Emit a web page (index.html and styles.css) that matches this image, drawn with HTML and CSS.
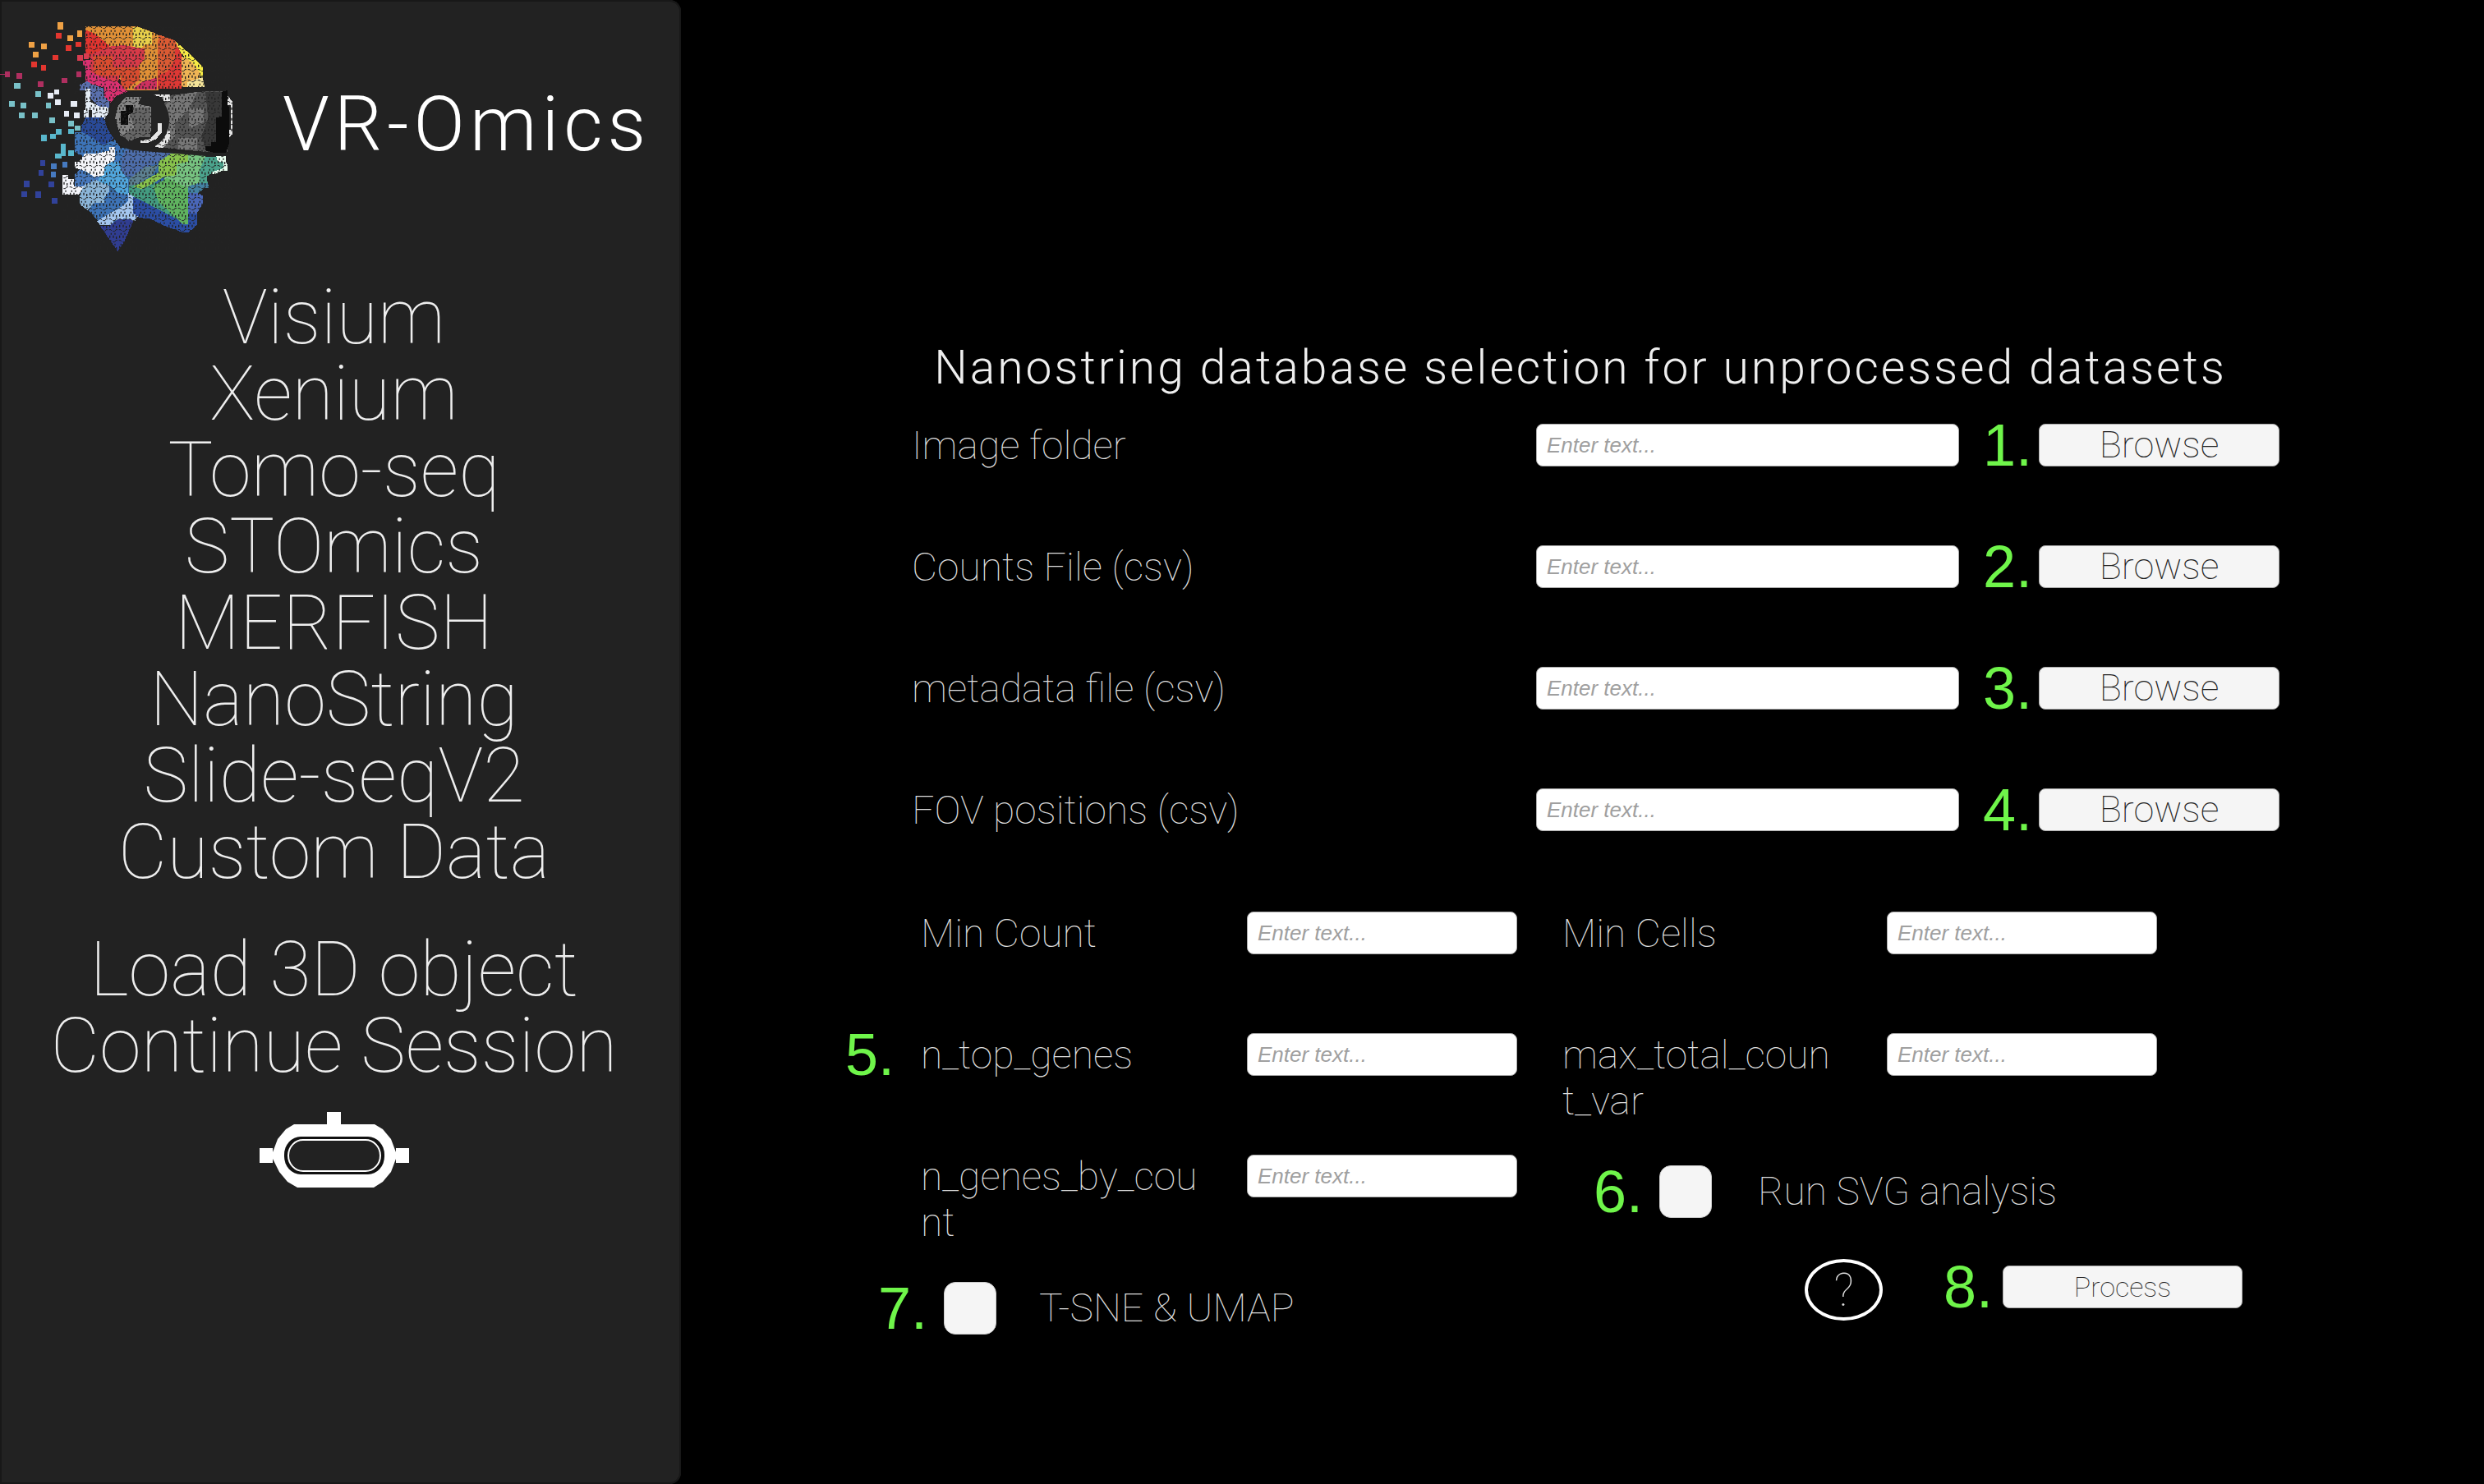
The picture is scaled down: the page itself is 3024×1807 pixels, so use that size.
FILE: index.html
```html
<!DOCTYPE html>
<html lang="en">
<head>
<meta charset="utf-8">
<title>VR-Omics</title>
<link rel="stylesheet" href="styles.css">
</head>
<body>
<div class="app">
  <aside class="sidebar">
    <header class="brand">
      <svg class="logo" viewBox="0 0 900 960" aria-hidden="true">
        <defs>
          <pattern id="mesh" width="36" height="39" patternUnits="userSpaceOnUse">
            <path d="M2 20h7l3 4M16 26h7l4-6h6" fill="none" stroke="#222" stroke-width="3"/>
            <path d="M5 2v9M18 2v9M29 6v9M10 32v6M24 32v6" fill="none" stroke="#222" stroke-width="4"/>
          </pattern>
        </defs>
        <path fill="#35679e" d="M300 540H480L740 575V640L715 700V800L690 830L560 790L490 790L460 830L380 810L300 740Z"/>
        <g shape-rendering="crispEdges">
          <path fill="#e09036" d="M313 96H500L560 118L580 130V330H460L380 190L313 112Z"/>
          <path fill="#e8d04a" d="M486 100H510L555 118V162H530L505 188H486Z"/>
          <path fill="#e0342f" d="M313 110L345 122L400 168V210H313Z"/>
          <path fill="#d73a48" d="M330 200L400 170L450 165L528 178V215L490 260L440 275L425 310H330Z"/>
          <path fill="#d84c2f" d="M340 205H410V275H345ZM410 245H510V290L465 325H440V275H410Z"/>
          <path fill="#da5a33" d="M578 126L640 148L660 178V232L612 275H575Z"/>
          <path fill="#dd3834" d="M640 175H662V324H575V275L612 262L640 215Z"/>
          <path fill="#cf3060" d="M490 320L520 298L574 283V326H490Z"/>
          <path fill="#f5ea45" d="M640 150L680 185L740 245V285L700 240L662 195Z"/>
          <path fill="#efb455" d="M662 205L700 225L730 265V318H662Z"/>
          <path fill="#f4e398" d="M685 300L740 282L748 318H685Z"/>
          <path fill="#da3070" d="M303 220H330V262L378 285L430 300L465 335L425 350L405 375L380 355V320L313 300V240H303Z"/>
          <path fill="#5a70ad" d="M290 310L318 297L340 310L378 322V350L398 370V392H365L330 360V330H290Z"/>
          <path fill="#e5edf5" d="M313 325H331V372L365 390L397 392V410L380 438H338L335 402H313ZM307 402H325V428H307Z"/>
          <path fill="#294a98" d="M313 430H380L392 470L415 505L385 530H365L335 502H300L296 462Z"/>
          <path fill="#3d74b8" d="M272 482H300L340 505L375 530L420 510L440 540L470 548V610H395L375 565L350 560L320 580L272 555Z"/>
          <path fill="#4d6dab" d="M460 545L640 560L600 590L550 605L490 650L445 640V575Z"/>
          <path fill="#5c8090" d="M470 655L530 610L580 602L555 640L490 680H470Z"/>
          <path fill="#50a5dc" d="M360 655L390 590L430 590L447 630L468 655V712L430 705L400 675H360Z"/>
          <path fill="#4678bd" d="M272 640L310 600V640L360 640V665L325 690H272Z"/>
          <path fill="#f4f5fa" d="M272 590H290L310 562H350L400 550V537H420V585L383 605L380 640L345 647L312 625L272 612ZM229 640H248V655H270V680L312 682V702L280 712H229Z"/>
          <path fill="#8bb5d8" d="M310 675L350 657L400 680V700L380 725V742L340 745L320 768L290 745V705Z"/>
          <path fill="#3d73b6" d="M382 720L400 700L470 712V738L400 780L360 810L325 770L345 742H382Z"/>
          <path fill="#a4c6ef" d="M468 704H488V765L510 780L492 808L460 798L418 805L405 822H365L355 808L400 780L430 765L468 735Z"/>
          <path fill="#303d91" d="M365 825H400L430 802H480L487 808L455 880L430 918L405 882Z"/>
          <path fill="#439b80" d="M470 680L560 660L600 700L645 800L560 755L470 708Z"/>
          <path fill="#76c280" d="M600 640L645 598L690 560L750 565V595L728 620V670L690 690L600 680Z"/>
          <path fill="#87c24c" d="M488 682L580 630V590L625 560H688V590L645 600V640L600 645L550 675L515 690Z"/>
          <path fill="#5fb35f" d="M560 680L610 650L650 670L690 690V820H670L610 765L580 740Z"/>
          <path fill="#4ba38c" d="M750 572H795L820 590V620L780 628L755 645L760 680H730V620Z"/>
          <path fill="#e9fff0" d="M790 571H824V590L830 600V624H810L785 636H774V628L815 615V590H795Z"/>
          <path fill="#4381a2" d="M688 680L730 668H762V688H745L725 705H688Z"/>
          <path fill="#4966b8" d="M688 706H725L740 715V745L718 780H688Z"/>
          <path fill="#2b4da3" d="M487 720L560 755L645 800L670 822H688V780H720V822L690 848H665L600 825L550 800L510 795L487 780Z"/>
          <path fill="#555" d="M600 350L760 332L830 335V555H750L600 540Z"/>
          <path fill="#777" d="M600 390L640 350L720 335L690 400L640 450V500L600 530ZM690 395H745V445L690 470ZM650 505H720V545H650Z"/>
          <path fill="#383838" d="M750 335H825V545H752L735 500L760 430Z"/>
          <path fill="#e5e5e5" d="M555 345H620V370H600L590 355ZM552 532L585 515L612 470L622 480V510L595 542ZM832 350L848 370V490L838 504V475H842V385H832Z"/>
        </g>
        <path fill="url(#mesh)" d="M270 94H850V920H229V630H270Z"/>
        <path fill="#242424" d="M400 400C425 345 470 330 530 334L750 322V334L560 345C600 365 618 400 618 440C618 490 590 525 550 543L750 560V570L480 548C430 535 405 500 395 450Z"/>
        <g shape-rendering="crispEdges">
          <path fill="#858585" d="M420 430L432 385L460 355H515L505 380L553 390V460L548 500L520 485L480 515L440 495Z"/>
          <path fill="#666" d="M465 390L550 395V500L515 500L470 515L445 495L490 465Z"/>
          <path fill="#0c0c0c" d="M442 405H460V385H487V410L467 420V455H442ZM810 335L832 330V385L838 395V520L825 558H785L750 550V535H770V520H790V430L810 425Z"/>
          <path fill="#e5e5e5" d="M512 515L545 508L575 480V450H590V485L570 508L540 522H512Z"/>
        </g>
        <path fill="url(#mesh)" d="M420 355H555V515H420Z"/>
        <g shape-rendering="crispEdges">
          <path fill="#efa145" d="M211 80h20v28h-20zM247 128h20v22h-20zM283 112h18v24h-18zM104 153h22v20h-22zM150 158h20v22h-20zM121 188h19v22h-19z"/>
          <path fill="#e3362f" d="M204 120h20v22h-20zM241 165h20v20h-20zM276 152h20v20h-20zM192 201h20v19h-20zM114 226h20v20h-20zM149 238h20v20h-20z"/>
          <path fill="#d83c50" d="M282 202h20v20h-20zM305 195h20v22h-20z"/>
          <path fill="#af2f60" d="M0 269h18v4h-18zM17 261h20v20h-20zM61 267h19v22h-19zM139 297h19v21h-19zM225 284h20v20h-20zM278 261h19v22h-19z"/>
          <path fill="#79c1c8" d="M52 304h22v20h-22zM130 334h21v20h-21zM32 368h21v22h-21zM76 375h21v20h-21zM167 375h20v20h-20zM69 411h20v21h-20zM118 411h20v21h-20zM180 430h20v20h-20zM249 441h22v20h-22zM272 458h22v20h-22z"/>
          <path fill="#e7ecf5" d="M174 338h20v22h-20zM197 326h20v20h-20zM200 364h21v20h-21zM259 369h24v20h-24zM233 404h20v22h-20zM270 411h20v20h-20z"/>
          <path fill="#59b7cc" d="M151 493h19v23h-19zM184 488h20v20h-20zM204 470h20v22h-20zM249 470h20v20h-20zM221 524h20v45h-20zM202 560h24v20h-24zM249 548h20v22h-20z"/>
          <path fill="#467ac0" d="M186 597h20v22h-20zM228 591h19v20h-19zM186 628h18v19h-18z"/>
          <path fill="#31429a" d="M147 585h19v22h-19zM140 620h20v22h-20zM86 661h22v24h-22zM176 663h21v20h-21zM79 698h19v22h-19zM128 700h21v24h-21zM189 722h22v21h-22z"/>
        </g>
      </svg>
      <span class="brand-name">VR-Omics</span>
    </header>
    <nav class="nav">
      <a href="#visium">Visium</a>
      <a href="#xenium">Xenium</a>
      <a href="#tomo-seq">Tomo-seq</a>
      <a href="#stomics">STOmics</a>
      <a href="#merfish">MERFISH</a>
      <a href="#nanostring">NanoString</a>
      <a href="#slide-seq">Slide-seqV2</a>
      <a href="#custom">Custom Data</a>
    </nav>
    <nav class="nav session">
      <a href="#load">Load 3D object</a>
      <a href="#continue">Continue Session</a>
    </nav>
    <button class="vr-button" type="button" aria-label="Enter VR">
      <svg viewBox="0 0 182 92" aria-hidden="true">
        <path fill="#fff" d="M82 0h17v16h-17zM0 44h16v18H0zM166 44h16v18h-16z"/>
        <path fill="#fff" d="M42 15h98l10 6 10 12 6 16v8l-6 16-10 12-11 7H46l-12-7-10-12-8-16v-8l6-16 10-12z"/>
        <rect x="30" y="30" width="122" height="46" rx="20" ry="22" fill="#111"/>
        <rect x="35" y="34" width="112" height="38" rx="18" ry="19" fill="#222" stroke="#fff" stroke-width="2"/>
      </svg>
    </button>
  </aside>

  <main class="main">
    <form class="form">
      <h1 class="title">Nanostring database selection for unprocessed datasets</h1>

      <div class="files">
        <div class="file-row">
          <label class="label" for="image">Image folder</label>
          <input class="input" id="image" type="text" placeholder="Enter text...">
          <span class="step">1.</span>
          <button class="button" type="button">Browse</button>
        </div>
        <div class="file-row">
          <label class="label" for="counts">Counts File (csv)</label>
          <input class="input" id="counts" type="text" placeholder="Enter text...">
          <span class="step">2.</span>
          <button class="button" type="button">Browse</button>
        </div>
        <div class="file-row">
          <label class="label" for="metadata">metadata file (csv)</label>
          <input class="input" id="metadata" type="text" placeholder="Enter text...">
          <span class="step">3.</span>
          <button class="button" type="button">Browse</button>
        </div>
        <div class="file-row">
          <label class="label" for="fov">FOV positions (csv)</label>
          <input class="input" id="fov" type="text" placeholder="Enter text...">
          <span class="step">4.</span>
          <button class="button" type="button">Browse</button>
        </div>
      </div>

      <div class="params">
        <span></span>
        <label class="label" for="min-count">Min Count</label>
        <input class="input" id="min-count" type="text" placeholder="Enter text...">
        <label class="label" for="min-cells">Min Cells</label>
        <input class="input" id="min-cells" type="text" placeholder="Enter text...">

        <span class="step">5.</span>
        <label class="label" for="top-genes">n_top_genes</label>
        <input class="input" id="top-genes" type="text" placeholder="Enter text...">
        <label class="label" for="max-var">max_total_count_var</label>
        <input class="input" id="max-var" type="text" placeholder="Enter text...">

        <span></span>
        <label class="label" for="by-count">n_genes_by_count</label>
        <input class="input" id="by-count" type="text" placeholder="Enter text...">
        <div class="check-row svg-check">
          <span class="step">6.</span>
          <input class="check" id="svg-analysis" type="checkbox">
          <label class="label" for="svg-analysis">Run SVG analysis</label>
        </div>
      </div>

      <div class="bottom">
        <div class="check-row tsne-check">
          <span class="step">7.</span>
          <input class="check" id="tsne" type="checkbox">
          <label class="label" for="tsne">T-SNE &amp; UMAP</label>
        </div>
        <div class="actions">
          <button class="help" type="button" aria-label="Help">?</button>
          <span class="step">8.</span>
          <button class="button process" type="submit">Process</button>
        </div>
      </div>
    </form>
  </main>
</div>
</body>
</html>
```

FILE: styles.css
```css
* {
  box-sizing: border-box;
}

body {
  margin: 0;
  background: #000;
  font-family: Roboto, sans-serif;
  font-weight: 100;
}

.app {
  display: flex;
  min-height: 100vh;
}

.sidebar {
  display: flex;
  flex-direction: column;
  align-items: center;
  width: 829px;
  padding-right: 16px;
  background: #222;
  border-radius: 0 14px 14px 0;
  box-shadow: inset 0 0 0 2px #181818;
}

.brand {
  display: flex;
  align-items: flex-start;
  align-self: flex-start;
  gap: 44px;
  height: 340px;
}

.logo {
  width: 300px;
  height: 320px;
}

.brand-name {
  padding-top: 98px;
  color: #fff;
  font-size: 92px;
  font-weight: 300;
  line-height: 108px;
  letter-spacing: 6px;
}

.nav {
  display: flex;
  flex-direction: column;
  align-items: center;
  margin-bottom: 50px;
}

.nav a {
  color: #eee;
  font-size: 92px;
  line-height: 93px;
  text-decoration: none;
}

.session {
  margin-bottom: 34px;
}

.vr-button {
  width: 182px;
  height: 92px;
  padding: 0;
  background: none;
  border: 0;
}

.vr-button svg {
  display: block;
}

.main {
  flex: 1;
  padding: 410px 200px 0;
}

.form {
  width: 100%;
  max-width: 1746px;
}

.title {
  margin: 0 0 30px;
  padding-left: 44px;
  color: #eee;
  font-size: 57px;
  font-weight: 300;
  line-height: 76px;
  letter-spacing: 3px;
  text-align: center;
  white-space: nowrap;
}

.files {
  display: flex;
  flex-direction: column;
  gap: 96px;
  padding-left: 81px;
}

.file-row {
  display: grid;
  grid-template-columns: 1fr 515px 97px 293px;
  height: 52px;
}

.label {
  margin-top: -1px;
  color: #ddd;
  font-size: 48px;
  line-height: 56px;
}

.input {
  min-width: 0;
  height: 52px;
  padding: 0 12px;
  background: #fff;
  border: 1px solid #aaa;
  border-radius: 8px;
  color: #323232;
  font: italic 26px "Liberation Sans", sans-serif;
}

.input::placeholder {
  color: #a0a0a0;
  opacity: 1;
}

.step {
  color: #6ff54a;
  font: 72px/52px "Liberation Sans", sans-serif;
}

.file-row .step {
  padding-right: 8px;
  text-align: right;
}

.button {
  height: 52px;
  padding: 0;
  background: #f5f5f5;
  border: 1px solid #aaa;
  border-radius: 8px;
  color: #222;
  font: 100 45px/50px Roboto, sans-serif;
}

.params {
  display: grid;
  grid-template-columns: 92px 397px 384px 395px 329px;
  row-gap: 96px;
  grid-auto-rows: 52px;
  margin-top: 98px;
}

.params > .label {
  width: 337px;
  word-break: break-all;
}

.params > .input {
  width: 329px;
}

.check-row {
  display: flex;
  align-items: center;
}

.svg-check {
  grid-column: span 2;
  height: 64px;
  margin-top: 13px;
  padding-left: 38px;
}

.check {
  appearance: none;
  width: 64px;
  height: 64px;
  margin: 0 52px 0 20px;
  background: #f5f5f5;
  border: 1px solid #ccc;
  border-radius: 14px;
}

.svg-check .check {
  margin-right: 56px;
}

.bottom {
  display: flex;
  justify-content: space-between;
  align-items: flex-start;
  margin-top: 75px;
  padding: 0 45px 0 40px;
}

.tsne-check {
  margin-top: 28px;
}

.actions {
  display: flex;
  align-items: flex-start;
}

.help {
  width: 95px;
  height: 75px;
  margin-right: 74px;
  padding: 0;
  background: #000;
  border: 4px solid #fff;
  border-radius: 50%;
  color: #ddd;
  font: 100 56px/60px Roboto, sans-serif;
}

.actions .step,
.process {
  margin-top: 8px;
}

.process {
  width: 292px;
  margin-left: 12px;
  font-size: 34px;
}
```
